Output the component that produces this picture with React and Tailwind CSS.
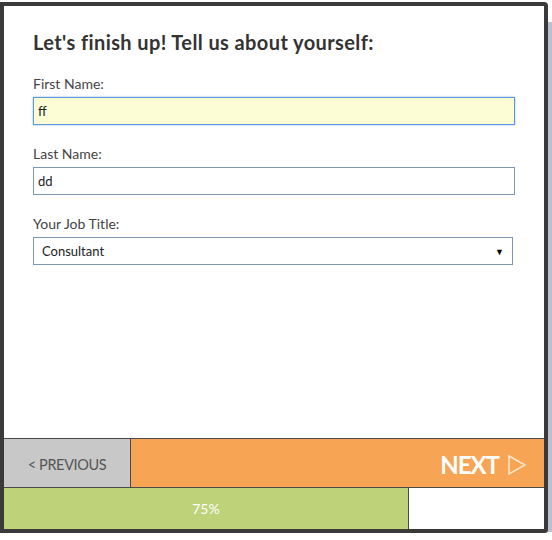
import React, { useState } from 'react';

const Field = ({ label, children }) => (
  <div className="mb-[20px]">
    <label className="block text-[14px] leading-[18px] text-[#444] mb-[4px]">{label}</label>
    {children}
  </div>
);

const App = () => {
  const [firstName, setFirstName] = useState('ff');
  const [lastName, setLastName] = useState('dd');
  const [jobTitle, setJobTitle] = useState('Consultant');
  const progress = 75;

  return (
    <div className="relative w-[552px] h-[540px] bg-white" style={{ fontFamily: 'Lato, "Open Sans", sans-serif' }}>
      <div className="absolute right-0 top-[20px] w-[4px] h-[510px] bg-[#b9c2d3]" />
      <div className="mt-[2px] w-[548px] h-[531px] border-[4px] border-[#3a3a3a] rounded-tr-[4px] rounded-br-[3px] flex flex-col overflow-hidden">
        <div className="flex-1 pl-[29px] pr-[29px] pt-[24px]">
          <h1 className="text-[20px] leading-[24px] font-bold text-[#333] tracking-[0.4px] mb-[21px]">Let's finish up! Tell us about yourself:</h1>

          <Field label="First Name:">
            <input
              value={firstName}
              onChange={(e) => setFirstName(e.target.value)}
              className="block w-[482px] h-[28px] px-[4px] text-[13px] text-[#222] bg-[#fdfdd5] border border-[#5b99df] outline-none shadow-[0_0_2px_#8fb8ea]"
            />
          </Field>

          <Field label="Last Name:">
            <input
              value={lastName}
              onChange={(e) => setLastName(e.target.value)}
              className="block w-[482px] h-[28px] px-[4px] text-[13px] text-[#222] bg-white border border-[#7d98b3] outline-none"
            />
          </Field>

          <Field label="Your Job Title:">
            <div className="relative w-[480px] h-[28px] border border-[#7d98b3] bg-white">
              <select
                value={jobTitle}
                onChange={(e) => setJobTitle(e.target.value)}
                className="appearance-none w-full h-full pl-[8px] text-[13px] text-[#222] bg-transparent outline-none"
              >
                <option>Consultant</option>
                <option>Manager</option>
                <option>Director</option>
              </select>
              <span className="pointer-events-none absolute right-[8px] top-[7px] text-[9px] text-black">▼</span>
            </div>
          </Field>
        </div>

        <div className="flex h-[50px] border-t border-b border-[#4a4a4a]">
          <button className="w-[127px] pt-[3px] bg-[#c8c8c8] border-r border-[#4a4a4a] text-[14.5px] text-[#555] tracking-tight">
            &lt; PREVIOUS
          </button>
          <button className="flex-1 pt-[3px] bg-[#f7a454] flex items-center justify-end pr-[17px] gap-[8px]">
            <span className="text-[24px] font-bold text-white tracking-[-1px]">NEXT</span>
            <svg width="20" height="22" viewBox="0 0 20 22">
              <polygon points="2,2 18,11 2,20" fill="none" stroke="#fde7cc" strokeWidth="1.5" />
            </svg>
          </button>
        </div>

        <div className="flex h-[41px] bg-white">
          <div
            className="h-full bg-[#bed27a] border-r border-[#4a4a4a] flex items-center justify-center text-[14px] text-white"
            style={{ width: `${progress}%` }}
          >
            {progress}%
          </div>
        </div>
      </div>
    </div>
  );
};

export default App;
